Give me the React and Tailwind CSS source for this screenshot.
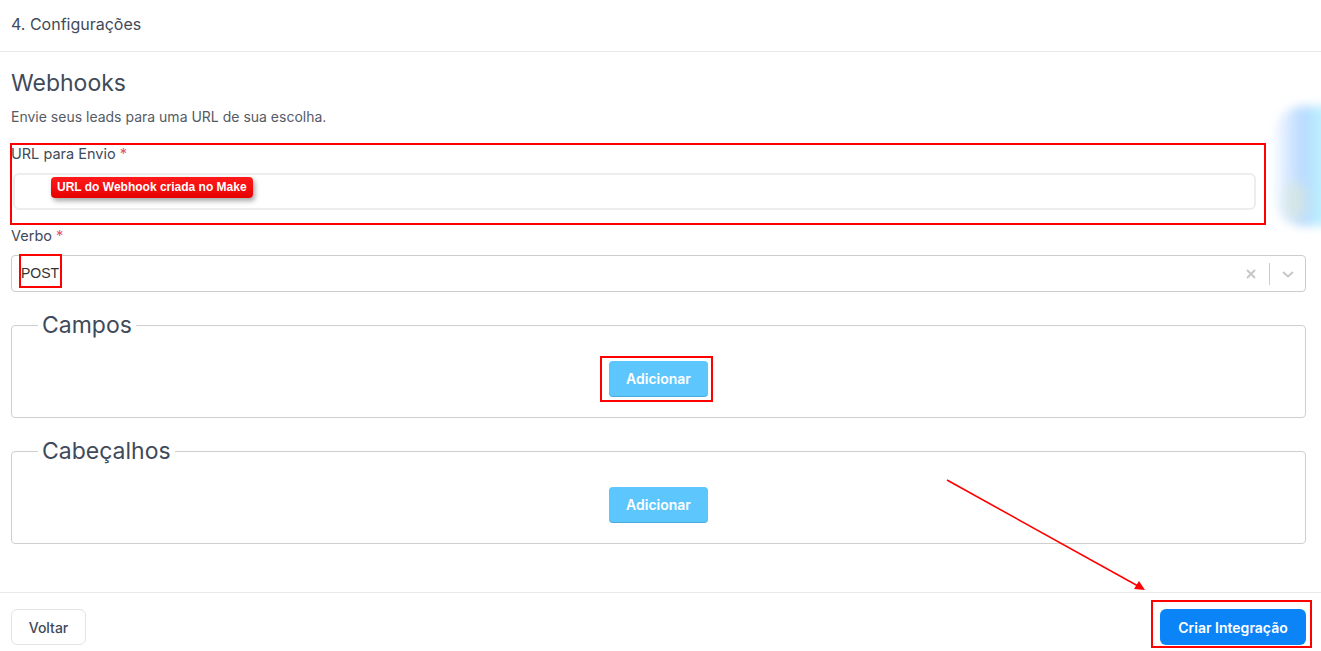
import React from "react";

const txt = "text-[#3f4a5a]";

function Required() {
  return <span className="ml-1 text-[#e2566e]">*</span>;
}

function Fieldset({ title, annotated }) {
  return (
    <fieldset className="ml-[11px] mr-[15px] mt-[20px] rounded-[4px] border border-[#cfcfcf] px-4 pb-[21px] pt-[23px]">
      <legend className={`ml-[10px] px-[4px] text-[23px] leading-[26px] ${txt}`}>{title}</legend>
      <div className="flex justify-center">
        <span className="relative inline-flex">
          <button className="h-[35px] w-[99px] rounded-[4px] bg-[#5cc6fd] text-[14px] font-semibold text-white shadow-[0_1px_0_#4aa9dc]">
            Adicionar
          </button>
          {annotated && (
            <span className="pointer-events-none absolute -bottom-[6px] -left-[9px] -right-[5px] -top-[5px] border-2 border-[#f00]" />
          )}
        </span>
      </div>
    </fieldset>
  );
}

export default function App() {
  return (
    <div className="relative h-[651px] w-[1321px] overflow-hidden bg-white font-['Inter','Noto_Sans',sans-serif]">
      {/* Header */}
      <div className={`flex h-[52px] items-center border-b border-[#e8e8e8] px-[11px] pb-[4px] text-[16px] ${txt}`}>
        4. Configurações
      </div>

      {/* Body */}
      <div className="pl-[11px] pr-[15px]">
        <h2 className={`mt-[18px] text-[23px] leading-[26px] ${txt}`}>Webhooks</h2>
        <p className="mt-[11px] text-[14px] leading-[20px] text-[#555b66]">
          Envie seus leads para uma URL de sua escolha.
        </p>

        {/* URL block */}
        <div className="relative mt-[18px]">
          <label className={`block text-[14.5px] leading-[18px] ${txt}`}>
            URL para Envio<Required />
          </label>
          <div className="relative ml-[2px] mt-[10px] h-[37px] w-[1243px] rounded-[6px] border-2 border-[#ededed]">
            <span className="absolute left-[36px] top-[2px] rounded-[4px] bg-gradient-to-b from-[#ff1a1a] to-[#e60000] px-[6px] py-[2px] font-['Liberation_Sans',Arial,sans-serif] text-[12px] font-bold leading-[17px] text-white shadow-[2px_3px_5px_rgba(0,0,0,0.35)]">
              URL do Webhook criada no Make
            </span>
          </div>
          <span className="pointer-events-none absolute -left-[1px] -top-[2px] h-[82px] w-[1256px] border-2 border-[#f00]" />
        </div>

        {/* Verbo */}
        <label className={`mt-[17px] block text-[14.5px] leading-[18px] ${txt}`}>
          Verbo<Required />
        </label>
        <div className="mt-[10px] flex h-[37px] items-center rounded-[4px] border border-[#cccccc] pl-[9px] pr-[10px]">
          <span className="relative font-['Liberation_Sans',Arial,sans-serif] text-[14px] text-[#333]">
            POST
            <span className="pointer-events-none absolute -bottom-[4px] -left-[2px] -right-[3px] -top-[9px] border-2 border-[#f00]" />
          </span>
          <div className="ml-auto flex items-center">
            <svg width="12" height="12" viewBox="0 0 12 12" className="mr-[12px]">
              <path d="M2 2 L10 10 M10 2 L2 10" stroke="#c7c7c7" strokeWidth="2" />
            </svg>
            <span className="h-[22px] w-px bg-[#cccccc]" />
            <svg width="14" height="10" viewBox="0 0 14 10" className="ml-[11px]">
              <path d="M2 3 L7 7.5 L12 3" stroke="#c7c7c7" strokeWidth="2" fill="none" />
            </svg>
          </div>
        </div>
      </div>

      <div className="mt-[1px]">
        <Fieldset title="Campos" annotated />
        <Fieldset title="Cabeçalhos" />
      </div>

      {/* Footer */}
      <div className="mt-[48px] flex items-center justify-between border-t border-[#e8e8e8] pl-[11px] pr-[15px] pt-[16px]">
        <button className={`h-[36px] w-[75px] rounded-[6px] border border-[#e3e3e3] bg-white text-[14px] font-medium ${txt}`}>
          Voltar
        </button>
        <span className="relative inline-flex">
          <button className="h-[36px] w-[146px] rounded-[6px] bg-[#0b84f7] text-[14px] font-semibold text-white">
            Criar Integração
          </button>
          <span className="pointer-events-none absolute -bottom-[3px] -left-[9px] -right-[6px] -top-[9px] border-2 border-[#f00]" />
        </span>
      </div>

      {/* Blurred blob at right */}
      <div className="pointer-events-none absolute right-[-10px] top-[106px] h-[120px] w-[56px] rounded-l-[28px] bg-gradient-to-r from-[#f4f7ff] via-[#b0d6ff] to-[#b8fbff] opacity-90 blur-[5px]" />
      <div className="pointer-events-none absolute right-[14px] top-[182px] h-[38px] w-[22px] rounded-full bg-[#dbe9d8] opacity-60 blur-[6px]" />

      {/* Arrow annotation */}
      <svg className="pointer-events-none absolute left-0 top-0" width="1321" height="651">
        <line x1="947" y1="480" x2="1138" y2="586" stroke="#f00" strokeWidth="1.6" />
        <polygon points="1145,590 1134,589 1139,581" fill="#f00" />
      </svg>
    </div>
  );
}
